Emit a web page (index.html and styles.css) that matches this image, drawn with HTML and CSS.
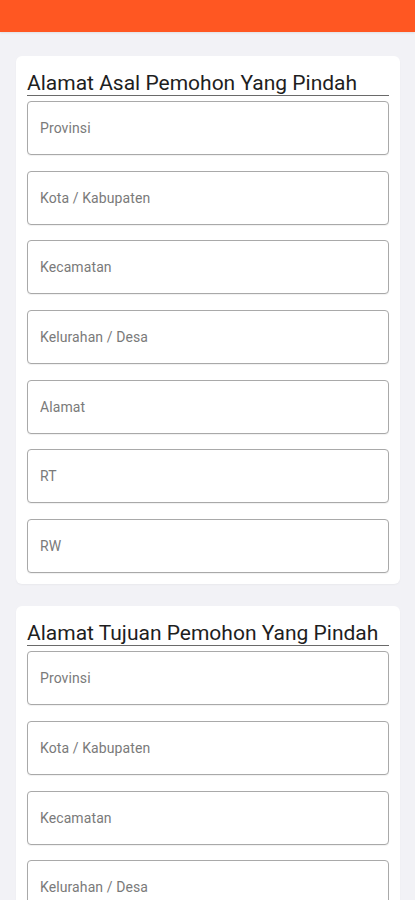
FILE: index.html
```html
<!DOCTYPE html>
<html lang="id">
<head>
<meta charset="utf-8">
<title>Alamat Pemohon</title>
<link rel="stylesheet" href="styles.css">
</head>
<body>
<header class="topbar"></header>
<main class="content">
  <section class="card">
    <h2 class="card-title">Alamat Asal Pemohon Yang Pindah</h2>
    <div class="fields">
      <input class="field" type="text" placeholder="Provinsi">
      <input class="field" type="text" placeholder="Kota / Kabupaten">
      <input class="field" type="text" placeholder="Kecamatan">
      <input class="field" type="text" placeholder="Kelurahan / Desa">
      <input class="field" type="text" placeholder="Alamat">
      <input class="field" type="text" placeholder="RT">
      <input class="field" type="text" placeholder="RW">
    </div>
  </section>
  <section class="card">
    <h2 class="card-title">Alamat Tujuan Pemohon Yang Pindah</h2>
    <div class="fields">
      <input class="field" type="text" placeholder="Provinsi">
      <input class="field" type="text" placeholder="Kota / Kabupaten">
      <input class="field" type="text" placeholder="Kecamatan">
      <input class="field" type="text" placeholder="Kelurahan / Desa">
      <input class="field" type="text" placeholder="Alamat">
      <input class="field" type="text" placeholder="RT">
      <input class="field" type="text" placeholder="RW">
    </div>
  </section>
</main>
</body>
</html>
```

FILE: styles.css
```css
* {
  box-sizing: border-box;
}

html, body {
  margin: 0;
  padding: 0;
}

body {
  background: #f2f2f6;
  font-family: Roboto, "Noto Sans", "Liberation Sans", sans-serif;
  color: #222;
}

.topbar {
  height: 32px;
  background: #ff5722;
  box-shadow: 0 1px 2px rgba(0, 0, 0, 0.08);
}

.content {
  padding: 24px 15px 24px 16px;
  display: flex;
  flex-direction: column;
  gap: 22px;
}

.card {
  background: #ffffff;
  border-radius: 6px;
  padding: 15px 11px 11px;
  box-shadow: 0 1px 2px rgba(0, 0, 0, 0.04);
}

.card-title {
  margin: 0 0 5px;
  font-size: 21px;
  line-height: 24px;
  font-weight: 400;
  color: #1e1e1e;
  border-bottom: 1px solid #6a6a6a;
  white-space: nowrap;
}

.fields {
  display: flex;
  flex-direction: column;
  gap: 15.7px;
}

.field {
  display: block;
  width: 100%;
  height: 54px;
  margin: 0;
  padding: 0 12px;
  border: 1px solid #a9a9a9;
  border-radius: 4px;
  background: #fff;
  font-family: Roboto, "Noto Sans", "Liberation Sans", sans-serif;
  font-size: 14px;
  letter-spacing: 0.1px;
  color: #333;
  outline: none;
  box-shadow: 0 1px 1px rgba(0, 0, 0, 0.06);
}

.field::placeholder {
  color: #7a7a7a;
  opacity: 1;
}
```
